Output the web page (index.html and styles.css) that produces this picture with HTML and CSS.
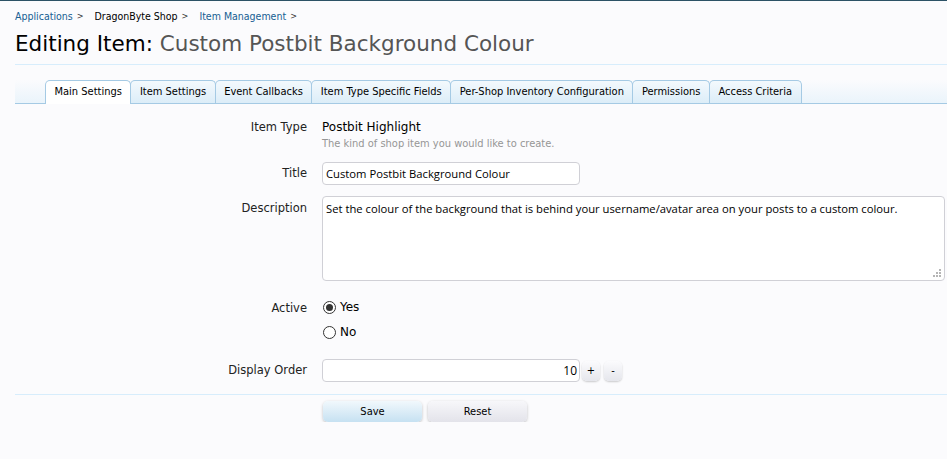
FILE: index.html
```html
<!DOCTYPE html>
<html>
<head>
<meta charset="utf-8">
<link rel="stylesheet" href="styles.css">
</head>
<body>
<div class="page">
  <nav class="crumbs">
    <a class="crumb link">Applications</a><span class="sep">&gt;</span>
    <a class="crumb">DragonByte Shop</a><span class="sep">&gt;</span>
    <a class="crumb link">Item Management</a><span class="sep">&gt;</span>
  </nav>
  <h1 class="title">Editing Item: <em>Custom Postbit Background Colour</em></h1>

  <ul class="tabs">
    <li class="tab active">Main Settings</li>
    <li class="tab">Item Settings</li>
    <li class="tab">Event Callbacks</li>
    <li class="tab">Item Type Specific Fields</li>
    <li class="tab">Per-Shop Inventory Configuration</li>
    <li class="tab">Permissions</li>
    <li class="tab">Access Criteria</li>
  </ul>

  <form class="form">
    <div class="row row-type">
      <div class="label">Item Type</div>
      <div class="value">
        <div class="static">Postbit Highlight</div>
        <div class="hint">The kind of shop item you would like to create.</div>
      </div>
    </div>
    <div class="row row-title">
      <div class="label">Title</div>
      <div class="value"><div class="input text-input">Custom Postbit Background Colour</div></div>
    </div>
    <div class="row row-desc">
      <div class="label">Description</div>
      <div class="value">
        <div class="input textarea">Set the colour of the background that is behind your username/avatar area on your posts to a custom colour.
          <svg class="grip" width="8" height="8" viewBox="0 0 8 8"><g fill="#b5b5b5"><rect x="6" y="0" width="2" height="2"/><rect x="3" y="3" width="2" height="2"/><rect x="6" y="3" width="2" height="2"/><rect x="0" y="6" width="2" height="2"/><rect x="3" y="6" width="2" height="2"/><rect x="6" y="6" width="2" height="2"/></g></svg>
        </div>
      </div>
    </div>
    <div class="row row-active">
      <div class="label">Active</div>
      <div class="value radios">
        <label class="radio"><span class="dot on"></span>Yes</label>
        <label class="radio"><span class="dot"></span>No</label>
      </div>
    </div>
    <div class="row row-order">
      <div class="label">Display Order</div>
      <div class="value spin">
        <div class="input num">10</div>
        <span class="spinbtn">+</span>
        <span class="spinbtn">-</span>
      </div>
    </div>
    <div class="submit">
      <span class="button primary">Save</span>
      <span class="button">Reset</span>
    </div>
  </form>
</div>
</body>
</html>
```
FILE: styles.css
```css
html, body {
  margin: 0;
  padding: 0;
  background: #fbfbfd;
}
body {
  border-top: 1px solid #2c5266;
  font-family: "DejaVu Sans Condensed", "DejaVu Sans", sans-serif;
  font-size: 11px;
  color: #000;
}
.page {
  padding: 0 0 0 15px;
}
.crumbs {
  display: flex;
  align-items: center;
  height: 14px;
  padding: 8px 0 0 0;
  font-size: 10.5px;
}
.crumb { color: #000; }
.crumb.link { color: #176093; }
.sep {
  color: #333;
  font-size: 9px;
  margin: 0 11px 0 4px;
}
.title {
  margin: 6px 0 0 0;
  font-family: "DejaVu Sans", sans-serif;
  font-weight: normal;
  font-size: 21.5px;
  line-height: 30px;
  color: #000;
  padding-bottom: 5px;
  border-bottom: 1px solid #d7edfc;
}
.title em {
  font-style: normal;
  color: #555;
}
.tabs {
  list-style: none;
  margin: 15px 0 0 0;
  padding: 0 0 0 30px;
  display: flex;
  align-items: flex-end;
  height: 23px;
  border-bottom: 1px solid #a5cae4;
  background: linear-gradient(to bottom, #fbfbfd 0%, #eaf4fb 100%);
}
.tab {
  height: 22px;
  line-height: 22px;
  padding: 0 8.5px;
  font-size: 11px;
  border: 1px solid #a5cae4;
  border-bottom: none;
  border-radius: 5px 5px 0 0;
  background: linear-gradient(to bottom, #f3f9fd 0%, #dcedf8 100%);
  color: #000;
  margin-right: -1px;
}
.tab.active {
  background: #fff;
  height: 23px;
  margin-bottom: -1px;
}
.form {
  display: flex;
  flex-direction: column;
}
.row {
  display: grid;
  grid-template-columns: 292px 1fr;
  column-gap: 15px;
}
.label {
  text-align: right;
  font-family: "DejaVu Sans", sans-serif;
  font-size: 11.5px;
  color: #222;
}
.value {
  font-family: "DejaVu Sans", sans-serif;
  font-size: 12px;
}
.row-type { margin-top: 16px; }
.row-type .label, .static { line-height: 14px; }
.hint {
  font-family: "DejaVu Sans Condensed", "DejaVu Sans", sans-serif;
  font-size: 11px;
  color: #969696;
  margin-top: 3px;
}
.input {
  box-sizing: border-box;
  background: #fff;
  border: 1px solid #d0d0d6;
  border-radius: 4px;
  font-family: "Open Sans", sans-serif;
  font-size: 11.25px;
  color: #000;
}
.row-title { margin-top: 12px; }
.row-title .label { line-height: 22px; }
.text-input {
  width: 258px;
  height: 23px;
  line-height: 21px;
  padding: 0 3px;
}
.row-desc { margin-top: 11px; }
.row-desc .label { padding-top: 5px; }
.textarea {
  position: relative;
  width: 623px;
  height: 85px;
  padding: 4px 3px;
  line-height: 16px;
}
.grip {
  position: absolute;
  right: 3px;
  bottom: 3px;
}
.row-active { margin-top: 18px; }
.row-active .label { line-height: 16px; padding-top: 1px; }
.radios {
  display: flex;
  flex-direction: column;
  gap: 9px;
}
.radio {
  display: flex;
  align-items: center;
  gap: 4px;
  height: 16px;
  font-size: 12px;
}
.dot {
  box-sizing: border-box;
  width: 13px;
  height: 13px;
  border: 1px solid #333;
  border-radius: 50%;
  background: #fff;
  margin-left: 1px;
  display: flex;
  align-items: center;
  justify-content: center;
}
.dot.on::after {
  content: "";
  width: 7px;
  height: 7px;
  border-radius: 50%;
  background: #333;
}
.row-order { margin-top: 19px; }
.row-order .label { line-height: 23px; }
.spin {
  display: flex;
  align-items: center;
  gap: 4px;
}
.num {
  width: 258px;
  height: 23px;
  line-height: 21px;
  text-align: right;
  padding: 0 2px;
  font-size: 12px;
}
.spinbtn {
  box-sizing: border-box;
  width: 18px;
  height: 20px;
  line-height: 19px;
  text-align: center;
  border-radius: 5px;
  background: linear-gradient(to bottom, #fbfbfd, #e5e6ec);
  box-shadow: 0 1px 2px rgba(0,0,0,0.2);
  font-family: "DejaVu Sans Condensed", "DejaVu Sans", sans-serif;
  font-size: 11px;
}
.spinbtn:first-of-type { margin-left: -2px; }
.submit {
  margin-top: 12px;
  border-top: 1px solid #d7edfc;
  padding: 6px 0 0 308px;
  display: flex;
  gap: 6px;
}
.button {
  box-sizing: border-box;
  width: 99px;
  height: 21px;
  line-height: 21px;
  text-align: center;
  font-size: 11px;
  border-radius: 5px;
  background: linear-gradient(to bottom, #f7f7fa, #e3e3ea);
  box-shadow: 0 1px 3px rgba(0,0,0,0.25);
}
.button.primary {
  background: linear-gradient(to bottom, #f1f8fc, #c6e1f2);
}
```
